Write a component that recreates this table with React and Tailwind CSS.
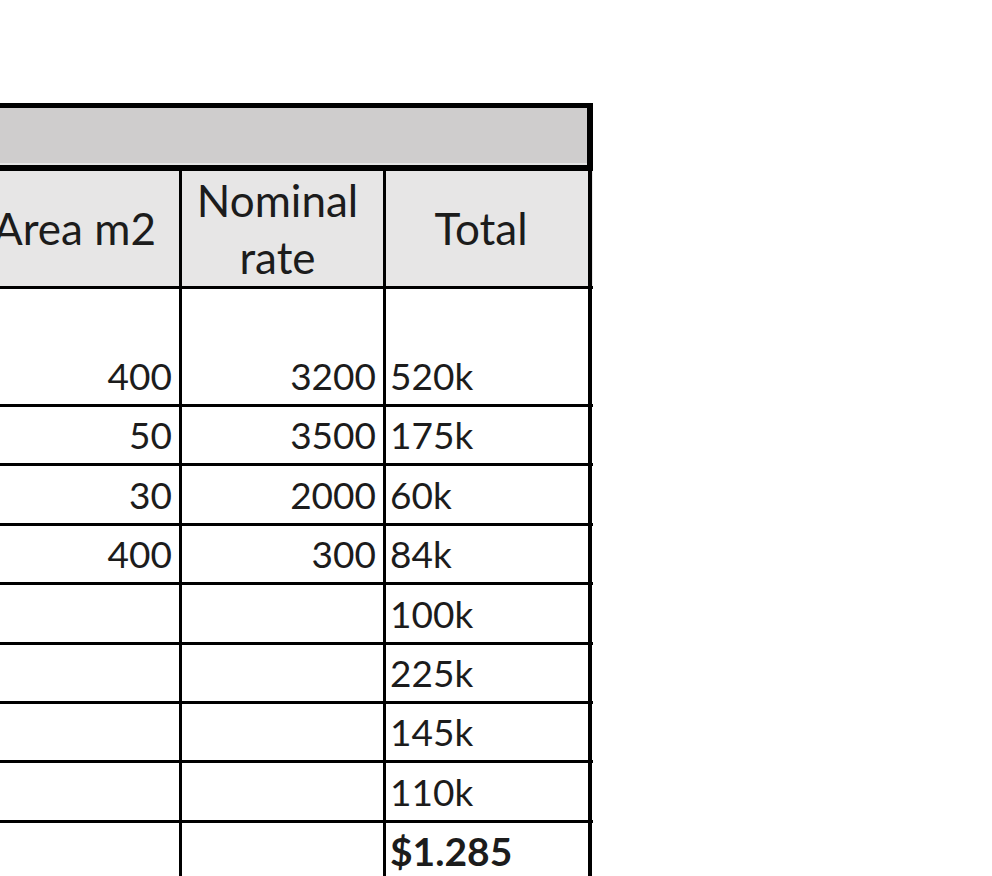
const rows = [
  { area: "400", rate: "3200", total: "520k", tall: true },
  { area: "50", rate: "3500", total: "175k" },
  { area: "30", rate: "2000", total: "60k" },
  { area: "400", rate: "300", total: "84k" },
  { total: "100k" },
  { total: "225k" },
  { total: "145k" },
  { total: "110k" },
  { total: "$1.285", bold: true },
];

function BodyRow({ row }) {
  return (
    <div
      className={
        "flex border-t-[3px] border-black text-[37px] leading-[44px] text-[#1c1c1c] " +
        (row.tall ? "h-[118px]" : "h-[59.4px]")
      }
    >
      <div className="w-[214px] flex-none border-r-[3px] border-black flex items-end justify-end pr-[7px] pb-[6px]">
        {row.area}
      </div>
      <div className="w-[204px] flex-none border-r-[3px] border-black flex items-end justify-end pr-[7px] pb-[6px]">
        {row.rate}
      </div>
      <div
        className={
          "w-[206px] flex-none border-r-4 border-black flex items-end pl-[4px] pb-[6px] " +
          (row.bold ? "font-bold text-[39px]" : "")
        }
      >
        {row.total}
      </div>
    </div>
  );
}

export default function App() {
  return (
    <div
      className="w-[992px] h-[876px] bg-white overflow-hidden pt-[103px]"
      style={{ fontFamily: "Lato, 'Open Sans', sans-serif" }}
    >
      <div className="w-[593px] overflow-hidden">
        <div className="-ml-[32px] w-[625px]">
          <div className="border-t-[5px] border-b-[6px] border-r-[6px] border-black">
            <div className="h-[57px] bg-[#cfcdcd] border-b-2 border-[#e4e4e4]" />
          </div>
          <div className="flex h-[115px] bg-[#e7e6e6] text-[44px] leading-[57px] text-[#1c1c1c] text-center">
            <div className="w-[214px] flex-none border-r-[3px] border-black flex items-center justify-center pl-[2px]">
              Area m2
            </div>
            <div className="w-[204px] flex-none border-r-[3px] border-black flex items-center justify-center pr-[10px]">
              <span>
                Nominal
                <br />
                rate
              </span>
            </div>
            <div className="w-[206px] flex-none border-r-4 border-black flex items-center justify-center pr-[12px]">
              Total
            </div>
          </div>
          {rows.map((row, i) => (
            <BodyRow key={i} row={row} />
          ))}
        </div>
      </div>
    </div>
  );
}
